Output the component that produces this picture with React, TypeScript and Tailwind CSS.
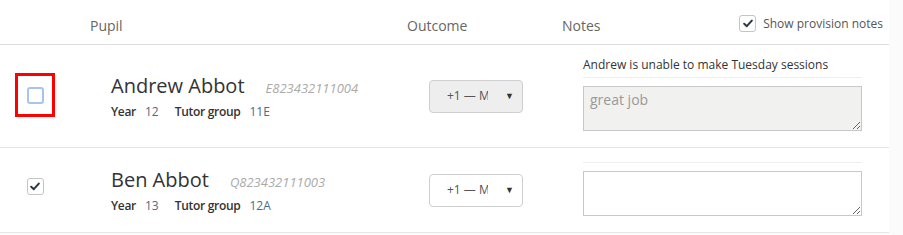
import React from 'react';

type Pupil = {
  name: string;
  code: string;
  year: string;
  group: string;
  checked: boolean;
  highlight?: boolean;
  note?: string;
  notes: string;
  locked: boolean;
};

const PUPILS: Pupil[] = [
  {
    name: 'Andrew Abbot',
    code: 'E823432111004',
    year: '12',
    group: '11E',
    checked: false,
    highlight: true,
    note: 'Andrew is unable to make Tuesday sessions',
    notes: 'great job',
    locked: true,
  },
  {
    name: 'Ben Abbot',
    code: 'Q823432111003',
    year: '13',
    group: '12A',
    checked: true,
    notes: '',
    locked: false,
  },
];

function Tick({ checked, focus }: { checked: boolean; focus?: boolean }) {
  return (
    <span
      className={`flex items-center justify-center w-[17px] h-[17px] rounded-[3px] bg-white ${
        focus ? 'border-2 border-[#a6c4f2]' : 'border border-[#c4c4c4]'
      }`}>
      {checked && (
        <svg width="10" height="9" viewBox="0 0 10 9">
          <path d="M1.2 4.8 L3.8 7.2 L8.8 1.6" fill="none" stroke="#2e3548" strokeWidth="2" strokeLinecap="round" strokeLinejoin="round" />
        </svg>
      )}
    </span>
  );
}

function Row({ p }: { p: Pupil }) {
  return (
    <div className="grid grid-cols-[82px_317px_155px_335px] border-b border-[#e6e6e6]">
      <div className="flex items-center justify-center pr-[12px]">
        {p.highlight ? (
          <div className="flex items-center justify-center w-[40px] h-[44px] border-[3px] border-[#ff0000] -mt-[2px]">
            <Tick checked={p.checked} focus />
          </div>
        ) : (
          <div className="-mt-[8px]">
            <Tick checked={p.checked} />
          </div>
        )}
      </div>

      <div className="flex flex-col justify-center pl-[29px]">
        <div className="flex items-baseline gap-[21px]">
          <span className="text-[20px] leading-[28px] text-[#333]">{p.name}</span>
          <span className="text-[13px] italic text-[#aaa]">{p.code}</span>
        </div>
        <div className="flex items-baseline text-[12px] leading-[18px] mt-[3px]">
          <span className="font-semibold tracking-[-0.3px] text-[#333]">Year</span>
          <span className="ml-[9px] text-[#4f6a84]">{p.year}</span>
          <span className="ml-[16px] font-semibold tracking-[-0.3px] text-[#333]">Tutor group</span>
          <span className="ml-[9px] text-[#4f6a84]">{p.group}</span>
        </div>
      </div>

      <div className="flex items-center pl-[30px]">
        <div
          className={`flex items-center w-[94px] h-[33px] rounded-[4px] border border-[#cfcfcf] pl-[17px] pr-[8px] ${
            p.locked ? 'bg-[#eeeeee]' : 'bg-white'
          }`}>
          <span className="w-[41px] overflow-hidden whitespace-nowrap text-[12px] text-[#555]">+1 — Mo</span>
          <span className="ml-auto text-[9px] text-[#333]">▼</span>
        </div>
      </div>

      <div className="pl-[29px] pr-[27px] pt-[11px] pb-[16px]">
        <div className="pb-[3px] border-b border-[#eeeeee]">
          {p.note && <p className="text-[12px] leading-[18px] text-[#333]">{p.note}</p>}
        </div>
        <textarea
          readOnly
          value={p.notes}
          className={`block mt-2 w-full h-[45px] border border-[#c8c8c8] px-[6px] py-[2px] text-[14px] text-[#999] outline-none ${
            p.locked ? 'bg-[#f1f1ef]' : 'bg-white'
          }`}
        />
      </div>
    </div>
  );
}

export default function App() {
  return (
    <main className="min-h-[235px] bg-[#fbfbfb]" style={{ fontFamily: '"Open Sans", "Liberation Sans", sans-serif' }}>
      <div className="w-[889px] bg-white">
        <div className="grid grid-cols-[82px_317px_155px_335px] h-[45px] pt-[6px] border-b border-[#dddddd] items-center text-[14px] text-[#666]">
          <div />
          <div className="pl-2">Pupil</div>
          <div className="pl-2">Outcome</div>
          <div className="flex items-center pl-2 pr-[6px]">
            <span>Notes</span>
            <label className="ml-auto -mt-[3px] flex items-center gap-[7px] text-[12px] text-[#555]">
              <Tick checked />
              Show provision notes
            </label>
          </div>
        </div>
        {PUPILS.map(p => (
          <Row key={p.code} p={p} />
        ))}
      </div>
    </main>
  );
}
